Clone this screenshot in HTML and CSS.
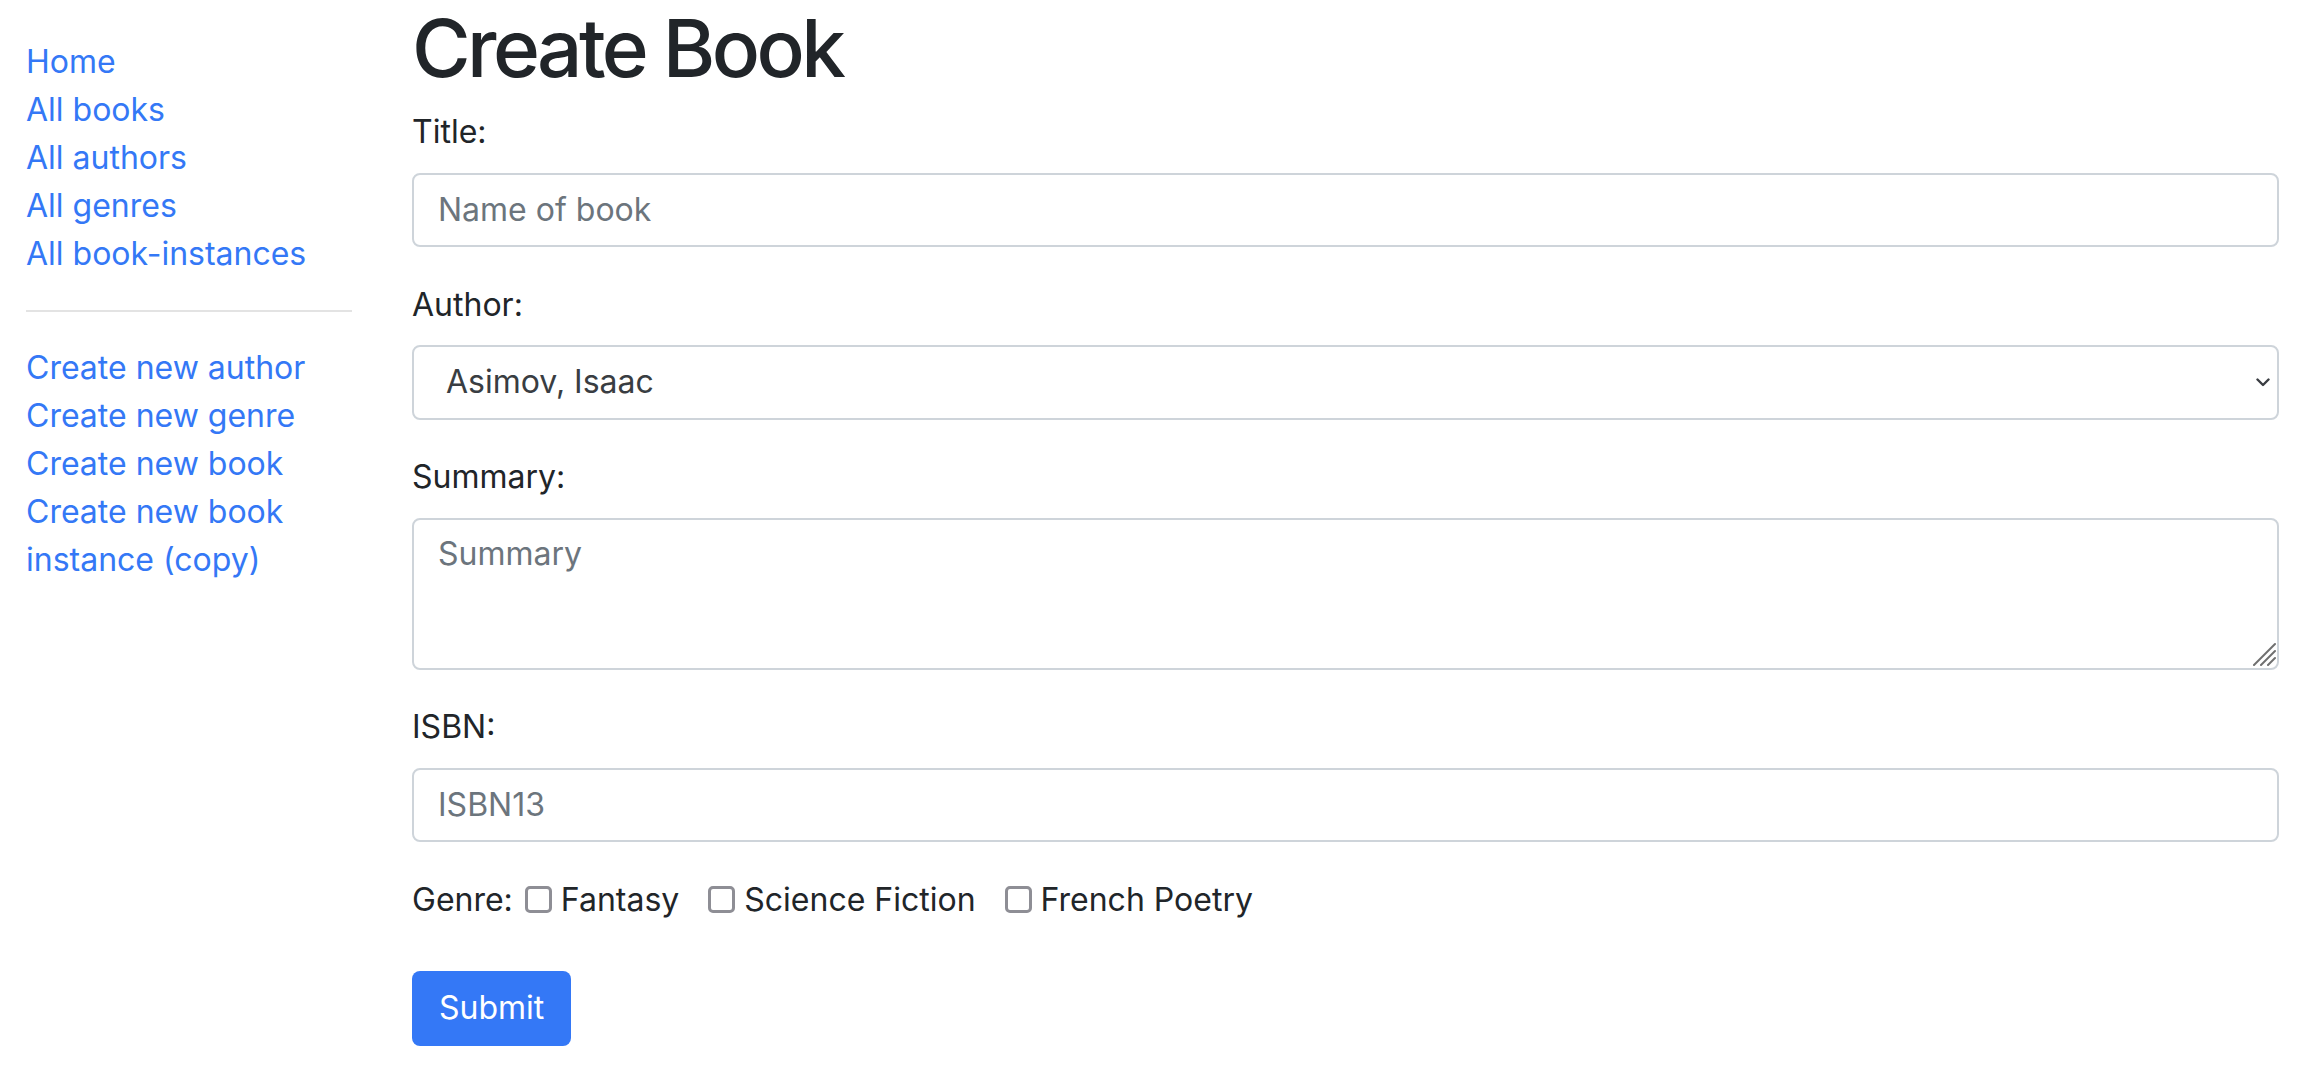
FILE: index.html
```html
<!DOCTYPE html>
<html lang="en">
<head>
<meta charset="utf-8">
<title>Create Book</title>
<link rel="stylesheet" href="styles.css">
</head>
<body>
<div class="page">
  <nav class="sidebar">
    <ul class="sidebar-nav">
      <li><a href="#">Home</a></li>
      <li><a href="#">All books</a></li>
      <li><a href="#">All authors</a></li>
      <li><a href="#">All genres</a></li>
      <li><a href="#">All book-instances</a></li>
      <li class="divider"></li>
      <li><a href="#">Create new author</a></li>
      <li><a href="#">Create new genre</a></li>
      <li><a href="#">Create new book</a></li>
      <li><a href="#">Create new book instance (copy)</a></li>
    </ul>
  </nav>
  <main class="content">
    <h1 class="title">Create Book</h1>
    <form class="book-form">
      <div class="form-group">
        <label class="field-label" for="title">Title:</label>
        <input class="form-control" id="title" type="text" placeholder="Name of book">
      </div>
      <div class="form-group">
        <label class="field-label" for="author">Author:</label>
        <div class="select-wrap">
          <select class="form-control form-select" id="author">
            <option>Asimov, Isaac</option>
          </select>
          <svg class="chevron" width="14" height="9" viewBox="0 0 14 9"><polyline points="1.5,1.5 7,7 12.5,1.5" fill="none" stroke="#3a3d42" stroke-width="2.4" stroke-linecap="round" stroke-linejoin="round"/></svg>
        </div>
      </div>
      <div class="form-group">
        <label class="field-label" for="summary">Summary:</label>
        <div class="textarea-wrap">
          <textarea class="form-control form-textarea" id="summary" placeholder="Summary"></textarea>
          <svg class="resizer" width="24" height="24" viewBox="0 0 24 24"><g stroke="#6f6f6f" stroke-width="2" stroke-linecap="round"><line x1="23" y1="2" x2="2" y2="23"/><line x1="23" y1="9" x2="9" y2="23"/><line x1="23" y1="16" x2="16" y2="23"/></g></svg>
        </div>
      </div>
      <div class="form-group">
        <label class="field-label" for="isbn">ISBN:</label>
        <input class="form-control" id="isbn" type="text" placeholder="ISBN13">
      </div>
      <div class="genre-row">
        <span class="genre-title">Genre:</span>
        <span class="genre-item"><input class="check" type="checkbox" id="g1"><label for="g1">Fantasy</label></span>
        <span class="genre-item"><input class="check" type="checkbox" id="g2"><label for="g2">Science Fiction</label></span>
        <span class="genre-item"><input class="check" type="checkbox" id="g3"><label for="g3">French Poetry</label></span>
      </div>
      <button class="btn-submit" type="submit">Submit</button>
    </form>
  </main>
</div>
</body>
</html>
```
FILE: styles.css
```css
* { box-sizing: border-box; }

html, body {
  margin: 0;
  padding: 0;
  background: #ffffff;
}

body {
  font-family: "Inter", "Noto Sans", "Liberation Sans", sans-serif;
  font-size: 32px;
  line-height: 48px;
  color: #212529;
}

.page {
  display: grid;
  grid-template-columns: 412px 1fr;
  padding-right: 29px;
}

.sidebar {
  padding-left: 26px;
  padding-right: 60px;
}

.sidebar-nav {
  list-style: none;
  margin: 37.5px 0 0 0;
  padding: 0;
}

.sidebar-nav a {
  color: #3478f6;
  text-decoration: none;
}

.sidebar-nav .divider {
  height: 2px;
  background: #e3e3e3;
  margin: 32px 0;
}

.content {
  min-width: 0;
}

.title {
  font-size: 80px;
  line-height: 96px;
  font-weight: 500;
  letter-spacing: -3.6px;
  margin: 0 0 12px 0;
  color: #212529;
}

.form-group {
  margin-bottom: 33.5px;
}

.field-label {
  display: block;
  height: 48px;
  margin-bottom: 16.5px;
}

.form-control {
  display: block;
  width: 100%;
  height: 74.5px;
  padding: 0 24px;
  font-family: inherit;
  font-size: 32px;
  line-height: 48px;
  color: #212529;
  background: #ffffff;
  border: 2px solid #ced4da;
  border-radius: 8px;
  outline: none;
}

.form-control::placeholder {
  color: #6c757d;
  opacity: 1;
}

.select-wrap,
.textarea-wrap {
  position: relative;
}

.form-select {
  appearance: none;
  -webkit-appearance: none;
  padding-left: 32px;
  color: #393d42;
}

.chevron {
  position: absolute;
  right: 9px;
  top: 50%;
  margin-top: -4.5px;
  pointer-events: none;
}

.form-textarea {
  height: 152px;
  padding: 10px 24px;
  resize: none;
}

.resizer {
  position: absolute;
  right: 3px;
  bottom: 4px;
  pointer-events: none;
}

.genre-row {
  display: flex;
  align-items: center;
  height: 48px;
  margin-bottom: 47px;
}

.genre-title {
  margin-right: 12px;
}

.genre-item {
  display: inline-flex;
  align-items: center;
  margin-right: 29px;
}

.check {
  appearance: none;
  -webkit-appearance: none;
  width: 27px;
  height: 27px;
  margin: 0 9px 0 0;
  border: 3px solid #8e8e95;
  border-radius: 5px;
  background: #ffffff;
}

.btn-submit {
  display: block;
  height: 75px;
  padding: 0 27px;
  font-family: inherit;
  font-size: 32px;
  line-height: 48px;
  color: #ffffff;
  background: #3478f6;
  border: none;
  border-radius: 8px;
}
```
